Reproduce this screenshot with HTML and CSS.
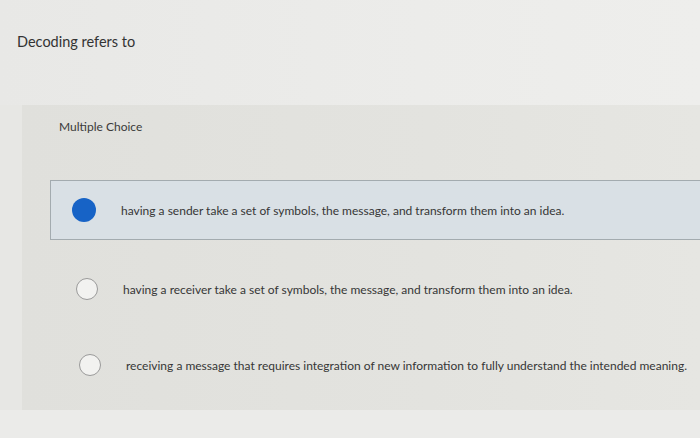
FILE: index.html
```html
<!DOCTYPE html>
<html>
<head>
<meta charset="utf-8">
<link rel="stylesheet" href="styles.css">
</head>
<body>
<div class="page">
  <div class="question">Decoding refers to</div>
  <div class="panel">
    <div class="type">Multiple Choice</div>
    <div class="options">
      <div class="option selected">
        <span class="radio"></span>
        <span class="text">having a sender take a set of symbols, the message, and transform them into an idea.</span>
      </div>
      <div class="option">
        <span class="radio"></span>
        <span class="text">having a receiver take a set of symbols, the message, and transform them into an idea.</span>
      </div>
      <div class="option">
        <span class="radio"></span>
        <span class="text">receiving a message that requires integration of new information to fully understand the intended meaning.</span>
      </div>
    </div>
  </div>
  <div class="footer"></div>
</div>
</body>
</html>
```

FILE: styles.css
```css
html, body {
  margin: 0;
  padding: 0;
}
body {
  width: 700px;
  height: 438px;
  overflow: hidden;
  background: #e7e7e4;
  font-family: Lato, "Open Sans", sans-serif;
  color: #3a3a3a;
}
.page {
  display: flex;
  flex-direction: column;
  height: 438px;
}
.question {
  height: 105px;
  box-sizing: border-box;
  padding: 33px 0 0 17px;
  font-size: 14.5px;
  color: #333;
  background: linear-gradient(90deg, #e8e8e6 0%, #ececea 60%, #eeeeec 100%);
}
.panel {
  margin-left: 22px;
  height: 305px;
  box-sizing: border-box;
  background: linear-gradient(90deg, #e0e0dc 0%, #e3e3df 60%, #e6e6e2 100%);
  padding-top: 14px;
}
.type {
  padding-left: 37px;
  font-size: 12px;
  color: #3a3a3a;
}
.options {
  margin-top: 46px;
  display: flex;
  flex-direction: column;
}
.option {
  display: flex;
  align-items: center;
  height: 60px;
  box-sizing: border-box;
  margin-left: 28px;
  padding-left: 21px;
  margin-bottom: 19px;
  border: 1px solid transparent;
}
.option:nth-child(2) { padding-left: 25px; margin-bottom: 16px; }
.option:nth-child(3) { padding-left: 28px; margin-bottom: 0; }
.option.selected {
  background: #d9e0e5;
  border-color: #a3abaf;
  border-right: none;
}
.radio {
  width: 22px;
  height: 22px;
  border-radius: 50%;
  box-sizing: border-box;
  border: 1.5px solid #9a9a9a;
  background: #f2f2f0;
  flex: none;
}
.selected .radio {
  width: 24px;
  height: 24px;
  border: none;
  background: #1763c6;
}
.text {
  margin-left: 25px;
  font-size: 12px;
  color: #363636;
}
.footer {
  flex: 1;
  background: #ebebe9;
}
```
